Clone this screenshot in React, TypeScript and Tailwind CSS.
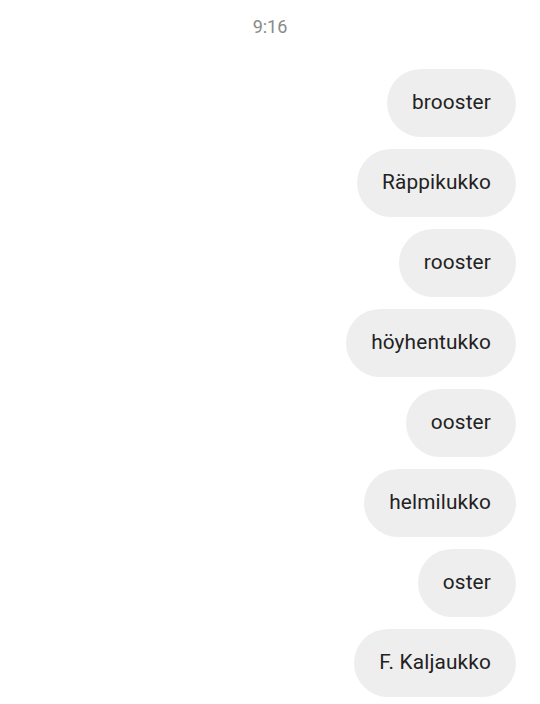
export default function App() {
  const items = ["brooster", "Räppikukko", "rooster", "höyhentukko", "ooster", "helmilukko", "oster", "F. Kaljaukko"];
  return (
    <div className="w-[540px] h-[704px] bg-white overflow-hidden flex flex-col" style={{ fontFamily: "Roboto, 'Liberation Sans', sans-serif" }}>
      <div className="pt-[15px] text-center text-[18px] leading-[24px] text-[#8a8a8a]">9:16</div>
      <div className="mt-[30px] flex flex-col items-end gap-[12px] pr-[24px]">
        {items.map((t) => (
          <div key={t} className="h-[68px] px-[25px] rounded-full bg-[#eeeeee] flex items-center text-[20.8px] tracking-[0.15px] text-[#222222]">
            {t}
          </div>
        ))}
      </div>
    </div>
  );
}
